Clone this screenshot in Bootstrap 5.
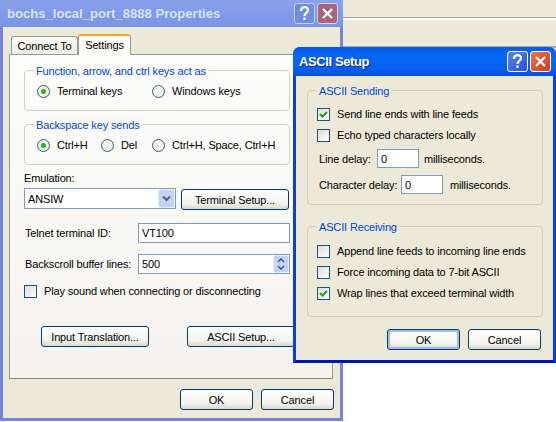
<!DOCTYPE html>
<html lang="en">
<head>
  <meta charset="UTF-8">
  <title>bochs_local_port_8888 Properties</title>
  <link href="https://cdn.jsdelivr.net/npm/bootstrap@5.3.0/dist/css/bootstrap.min.css" rel="stylesheet">
  <style>
    body {
      width: 556px;
      height: 422px;
      overflow: hidden;
      position: relative;
      background: #fff;
      font: 11px/14px "Liberation Sans", Arial, sans-serif;
      letter-spacing: -0.15px;
      color: #000;
    }
    /* what shows of the window behind both dialogs */
    .desk-back { position: absolute; left: 343px; right: 0; top: 0; height: 362px; background: #ece9d8; }
    .desk-rule { height: 3px; margin-top: 17px; border-top: 1px solid #aca899; background: #fff; }
    .desk-edge { height: 2px; margin-top: 26px; background: #aca899; }

    .win-back, .win-front { position: absolute; background: #ece9d8; }
    .win-back { left: 0; top: 0; width: 343px; height: 421px; border: solid #7585de; border-width: 0 3px 3px; }
    .win-front { left: 293px; top: 47px; width: 263px; height: 316px; border: solid #0a3fdc; border-width: 0 3px 3px; border-bottom-color: #0019a8; border-radius: 7px 7px 0 0; }

    .title-back, .title-front { margin: 0 -3px; padding: 0 5px 0 7px; font-weight: 700; font-size: 13px; letter-spacing: 0.05px; }
    .title-back { height: 27px; color: #d8e4f8; background: linear-gradient(#8aa2ea, #7f9bea 50%, #7a94e2); }
    .title-front { height: 29px; padding-left: 6px; color: #fff; letter-spacing: -0.4px; text-shadow: 1px 1px 1px #0a2a90; border-radius: 7px 7px 0 0; background: linear-gradient(#0a5ae6, #0466f2 25%, #0a62f0 70%, #0a4fdc); }
    .cap-btns { gap: 2px; }
    .cap-btn { width: 21px; height: 21px; border: 1px solid #fff; border-radius: 3px; display: block; }
    .cap-help { background: linear-gradient(135deg, #5a86f0, #2450d8); }
    .cap-close { background: linear-gradient(135deg, #e8764e, #c8401c); }
    .win-back .cap-help { background: #6f8ee4; border-color: #c8d4f2; }
    .win-back .cap-close { background: #a8637f; border-color: #c8d4f2; }
    .cap-btn svg { display: block; }

    .back-body { padding: 7px 0 0 6px; }
    .tab-row { height: 20px; padding-left: 2px; align-items: flex-end; position: relative; z-index: 1; }
    .tab-item { background: linear-gradient(#fafaf6, #efeee4); border: 1px solid #919b9c; border-bottom: 0; height: 18px; width: 67px; padding-top: 2px; text-align: center; border-radius: 3px 3px 0 0; }
    .tab-on { background: #fbfbf8; height: 21px; width: 53px; margin-bottom: -1px; padding-top: 2px; border-top: 2px solid #f5a623; }
    .sheet { width: 324px; height: 325px; padding: 15px 0 0 14px; background: linear-gradient(#fdfdfc, #f4f3ee); border: 1px solid #919b9c; border-bottom-color: #8a8778; border-right-color: #9b9888; }
    .sheet .xp-group { width: 266px; height: 41px; margin-bottom: 13px; padding: 13px 0 0 12px; }
    .sheet .xp-group + .xp-group { margin-bottom: 6px; }

    .xp-group { position: relative; border: 1px solid #d0d0bf; border-radius: 4px; }
    .xp-legend { position: absolute; left: 9px; top: -7px; padding: 0 3px 0 2px; color: #0046d5; background: #faf9f6; white-space: nowrap; }
    .win-front .xp-legend { background: #ece9d8; }
    .xp-item { display: flex; align-items: center; gap: 7px; height: 14px; white-space: nowrap; }
    .xp-radio { width: 13px; height: 13px; border: 1px solid #2f5a85; border-radius: 50%; background: #f3f2ec; display: flex; align-items: center; justify-content: center; flex: none; }
    .xp-radio.on::after { content: ""; width: 5px; height: 5px; border-radius: 50%; background: #2fae2f; }
    .xp-check { width: 13px; height: 13px; border: 1px solid #1c5180; background: linear-gradient(135deg, #dfded8, #fdfdfb); flex: none; display: block; }
    .xp-check svg { display: block; }
    .w-terminal { width: 115px; }
    .w-ctrl { width: 64px; }
    .w-del { width: 51px; }

    .xp-input { height: 20px; min-height: 0; padding: 0 3px; font-size: inherit; line-height: 18px; letter-spacing: inherit; color: #000; background: #fff; border: 1px solid #7f9db9; border-radius: 0; }
    .xp-box { position: relative; flex: none; }
    .xp-arrow { position: absolute; right: 1px; top: 1px; display: block; }
    .xp-btn { width: 108px; height: 21px; padding: 0; font-size: inherit; line-height: 14px; letter-spacing: inherit; color: #000; background: linear-gradient(#fff, #f4f3ee 70%, #dcd8cc); border: 1px solid #003c74; border-radius: 3px; }
    .xp-small { width: 73px; }
    .xp-default { box-shadow: inset 0 0 0 2px #a4bde8; }

    .label-emu { height: 14px; }
    .row-emu { margin-top: 3px; gap: 5px; align-items: flex-start; }
    .combo { width: 152px; height: 21px; }
    .row-btn { margin-top: 1px; }
    .row-field { width: 266px; align-items: center; justify-content: space-between; }
    .row-field > span { padding-left: 1px; }
    .row-telnet { margin-top: 13px; }
    .row-back { margin-top: 11px; }
    .field-wide { width: 152px; }
    .row-sound { margin-top: 10px; }
    .row-actions { margin-top: 28px; padding-left: 17px; gap: 38px; }
    .back-foot { margin-top: 10px; width: 325px; justify-content: flex-end; gap: 8px; }

    .front-body { padding: 14px 0 0 11px; }
    .win-front .xp-group { width: 236px; padding-left: 9px; }
    .grp-send { height: 115px; padding-top: 16px; }
    .grp-recv { height: 91px; margin-top: 21px; padding-top: 17px; }
    .stack-send { gap: 7px; }
    .stack-recv { gap: 7px; }
    .delay-line { margin-left: 2px; margin-top: 7px; align-items: center; height: 19px; white-space: nowrap; }
    .delay-next { margin-top: 7px; }
    .delay-input { width: 42px; height: 19px; flex: none; }
    .label-line { width: 58px; flex: none; }
    .label-char { width: 82px; flex: none; }
    .gap-line { margin-left: 5px; }
    .gap-char { margin-left: 7px; }
    .front-foot { margin-top: 12px; width: 234px; justify-content: flex-end; gap: 8px; }
  </style>
</head>
<body>
  <div class="desk-back">
    <div class="desk-rule"></div>
    <div class="desk-edge"></div>
  </div>

  <div class="win-back">
    <div class="title-back d-flex align-items-center justify-content-between">
      <span>bochs_local_port_8888 Properties</span>
      <div class="d-flex cap-btns">
        <span class="cap-btn cap-help"><svg width="19" height="19" viewBox="0 0 19 19"><path d="M6 7c0-5 7-5 7-1 0 3-3.500 3-3.500 6" fill="none" stroke="#fff" stroke-width="2.200"/><rect x="8.300" y="13.500" width="2.400" height="2.400" fill="#fff"/></svg></span>
        <span class="cap-btn cap-close"><svg width="19" height="19" viewBox="0 0 19 19"><path d="M5 5l9 9M14 5l-9 9" stroke="#fff" stroke-width="2.200"/></svg></span>
      </div>
    </div>
    <div class="back-body">
      <div class="tab-row d-flex">
        <div class="tab-item">Connect To</div>
        <div class="tab-item tab-on">Settings</div>
      </div>
      <div class="sheet">
        <div class="xp-group">
          <div class="xp-legend">Function, arrow, and ctrl keys act as</div>
          <div class="d-flex">
            <div class="xp-item w-terminal"><span class="xp-radio on"></span>Terminal keys</div>
            <div class="xp-item"><span class="xp-radio"></span>Windows keys</div>
          </div>
        </div>
        <div class="xp-group">
          <div class="xp-legend">Backspace key sends</div>
          <div class="d-flex">
            <div class="xp-item w-ctrl"><span class="xp-radio on"></span>Ctrl+H</div>
            <div class="xp-item w-del"><span class="xp-radio"></span>Del</div>
            <div class="xp-item"><span class="xp-radio"></span>Ctrl+H, Space, Ctrl+H</div>
          </div>
        </div>
        <div class="label-emu">Emulation:</div>
        <div class="d-flex row-emu">
          <div class="xp-box">
            <input class="form-control xp-input combo" value="ANSIW" readonly>
            <svg class="xp-arrow" width="17" height="19" viewBox="0 0 17 19"><rect x=".5" y=".5" width="16" height="18" rx="2" fill="#c3d3f8" stroke="#e6edfc"/><path d="M5 7.500l3.500 3.500 3.500-3.500" fill="none" stroke="#4d6185" stroke-width="2"/></svg>
          </div>
          <button class="btn xp-btn row-btn" type="button">Terminal Setup...</button>
        </div>
        <div class="d-flex row-field row-telnet">
          <span>Telnet terminal ID:</span>
          <input class="form-control xp-input field-wide" value="VT100" readonly>
        </div>
        <div class="d-flex row-field row-back">
          <span>Backscroll buffer lines:</span>
          <div class="xp-box">
            <input class="form-control xp-input field-wide" value="500" readonly>
            <svg class="xp-arrow" width="16" height="18" viewBox="0 0 16 18"><rect x=".5" y=".5" width="15" height="17" rx="2" fill="#c3d3f8" stroke="#e6edfc"/><path d="M5 7l3-3 3 3M5 11l3 3 3-3" fill="none" stroke="#4d6185" stroke-width="1.600"/></svg>
          </div>
        </div>
        <div class="xp-item row-sound"><span class="xp-check"></span>Play sound when connecting or disconnecting</div>
        <div class="d-flex row-actions">
          <button class="btn xp-btn" type="button">Input Translation...</button>
          <button class="btn xp-btn" type="button">ASCII Setup...</button>
        </div>
      </div>
      <div class="d-flex back-foot">
        <button class="btn xp-btn xp-small" type="button">OK</button>
        <button class="btn xp-btn xp-small" type="button">Cancel</button>
      </div>
    </div>
  </div>

  <div class="win-front">
    <div class="title-front d-flex align-items-center justify-content-between">
      <span>ASCII Setup</span>
      <div class="d-flex cap-btns">
        <span class="cap-btn cap-help"><svg width="19" height="19" viewBox="0 0 19 19"><path d="M6 7c0-5 7-5 7-1 0 3-3.500 3-3.500 6" fill="none" stroke="#fff" stroke-width="2.200"/><rect x="8.300" y="13.500" width="2.400" height="2.400" fill="#fff"/></svg></span>
        <span class="cap-btn cap-close"><svg width="19" height="19" viewBox="0 0 19 19"><path d="M5 5l9 9M14 5l-9 9" stroke="#fff" stroke-width="2.200"/></svg></span>
      </div>
    </div>
    <div class="front-body">
      <div class="xp-group grp-send">
        <div class="xp-legend">ASCII Sending</div>
        <div class="d-flex flex-column stack-send">
          <div class="xp-item"><span class="xp-check"><svg width="11" height="11" viewBox="0 0 11 11"><path d="M2 5l2.500 2.500L9 3" fill="none" stroke="#21a121" stroke-width="2"/></svg></span>Send line ends with line feeds</div>
          <div class="xp-item"><span class="xp-check"></span>Echo typed characters locally</div>
        </div>
        <div class="d-flex delay-line">
          <span class="label-line">Line delay:</span>
          <input class="form-control xp-input delay-input" value="0" readonly>
          <span class="gap-line">milliseconds.</span>
        </div>
        <div class="d-flex delay-line delay-next">
          <span class="label-char">Character delay:</span>
          <input class="form-control xp-input delay-input" value="0" readonly>
          <span class="gap-char">milliseconds.</span>
        </div>
      </div>
      <div class="xp-group grp-recv">
        <div class="xp-legend">ASCII Receiving</div>
        <div class="d-flex flex-column stack-recv">
          <div class="xp-item"><span class="xp-check"></span>Append line feeds to incoming line ends</div>
          <div class="xp-item"><span class="xp-check"></span>Force incoming data to 7-bit ASCII</div>
          <div class="xp-item"><span class="xp-check"><svg width="11" height="11" viewBox="0 0 11 11"><path d="M2 5l2.500 2.500L9 3" fill="none" stroke="#21a121" stroke-width="2"/></svg></span>Wrap lines that exceed terminal width</div>
        </div>
      </div>
      <div class="d-flex front-foot">
        <button class="btn xp-btn xp-small xp-default" type="button">OK</button>
        <button class="btn xp-btn xp-small" type="button">Cancel</button>
      </div>
    </div>
  </div>
</body>
</html>
